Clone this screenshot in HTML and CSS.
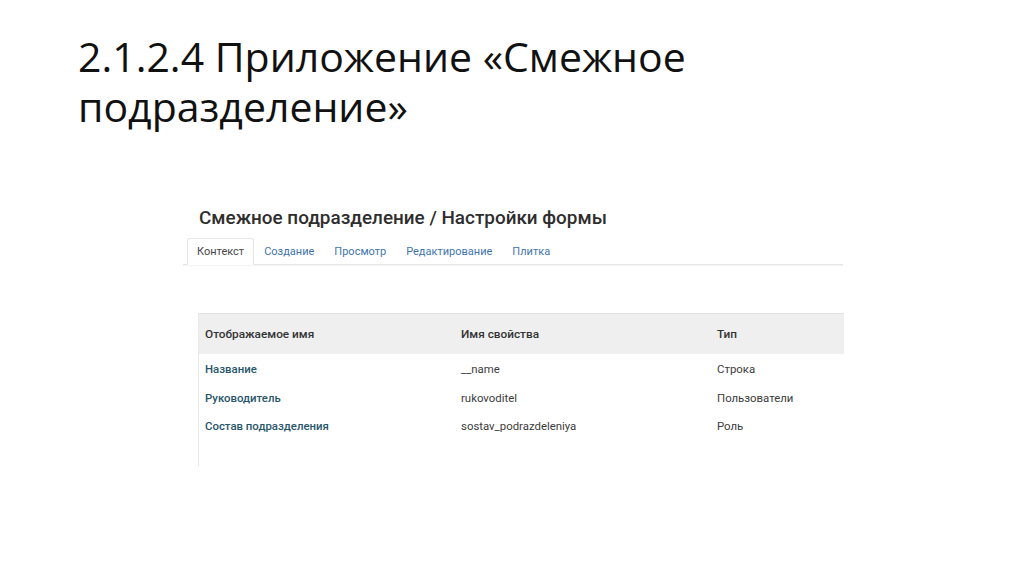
FILE: index.html
```html
<!DOCTYPE html>
<html>
<head>
    <title>2.1.2.4 Приложение «Смежное подразделение»</title>
    <link rel="stylesheet" href="styles.css">
</head>
<body>
    <div class="slide">
        <h1 class="slide-title">2.1.2.4 Приложение «Смежное подразделение»</h1>

        <!-- Screenshot of the form settings -->
        <div class="shot">
            <h2 class="shot-title">Смежное подразделение / Настройки формы</h2>
            <div class="tabs">
                <span class="tab active">Контекст</span>
                <span class="tab">Создание</span>
                <span class="tab">Просмотр</span>
                <span class="tab">Редактирование</span>
                <span class="tab">Плитка</span>
            </div>

            <div class="props">
                <div class="props-row props-head">
                    <span>Отображаемое имя</span>
                    <span>Имя свойства</span>
                    <span>Тип</span>
                </div>
                <div class="props-row">
                    <span class="prop-name">Название</span>
                    <span>__name</span>
                    <span>Строка</span>
                </div>
                <div class="props-row">
                    <span class="prop-name">Руководитель</span>
                    <span>rukovoditel</span>
                    <span>Пользователи</span>
                </div>
                <div class="props-row">
                    <span class="prop-name">Состав подразделения</span>
                    <span>sostav_podrazdeleniya</span>
                    <span>Роль</span>
                </div>
            </div>
        </div>
    </div>
</body>
</html>
```

FILE: styles.css
```css
body {
    margin: 0;
    background: #fff;
}

.slide {
    width: 1024px;
    height: 574px;
    overflow: hidden;
    box-sizing: border-box;
    padding: 31px 0 0 78px;
}

.slide-title {
    margin: 0;
    width: 660px;
    font-family: "Open Sans", sans-serif;
    font-weight: 400;
    font-size: 41px;
    line-height: 50px;
    color: #111;
}

.shot {
    width: 660px;
    margin: 74px 0 0 105px;
    font-family: Roboto, "Liberation Sans", sans-serif;
    color: #3a3a3a;
}

.shot-title {
    margin: 0 0 7px 16px;
    font-size: 18.9px;
    font-weight: 500;
    line-height: 26px;
    color: #2e2e2e;
}

.tabs {
    display: flex;
    padding-left: 4px;
    border-bottom: 1px solid #e6e6e6;
    box-shadow: 0 1px 1px rgba(0, 0, 0, 0.04);
}

.tab {
    padding: 6px 9px;
    margin-bottom: -1px;
    font-size: 11px;
    line-height: 13px;
    color: #3f75ad;
    border: 1px solid transparent;
    border-radius: 3px 3px 0 0;
}

.tab.active {
    color: #484848;
    background: #fff;
    border-color: #e6e6e6;
    border-bottom-color: #fff;
}

.props {
    margin: 48px 0 0 15px;
    width: 645px;
    height: 153px;
    border-left: 1px solid #e8e8e8;
}

.props-row {
    display: grid;
    grid-template-columns: 256px 256px 1fr;
    padding-left: 6px;
    height: 28.5px;
    align-items: center;
    font-size: 11.4px;
    color: #3c3c3c;
}

.props-head {
    height: 40px;
    margin-bottom: 1px;
    background: #efefef;
    border-top: 1px solid #e2e2e2;
    font-size: 11.8px;
    font-weight: 500;
    color: #333;
}

.prop-name {
    font-weight: 500;
    color: #27566b;
}
```
